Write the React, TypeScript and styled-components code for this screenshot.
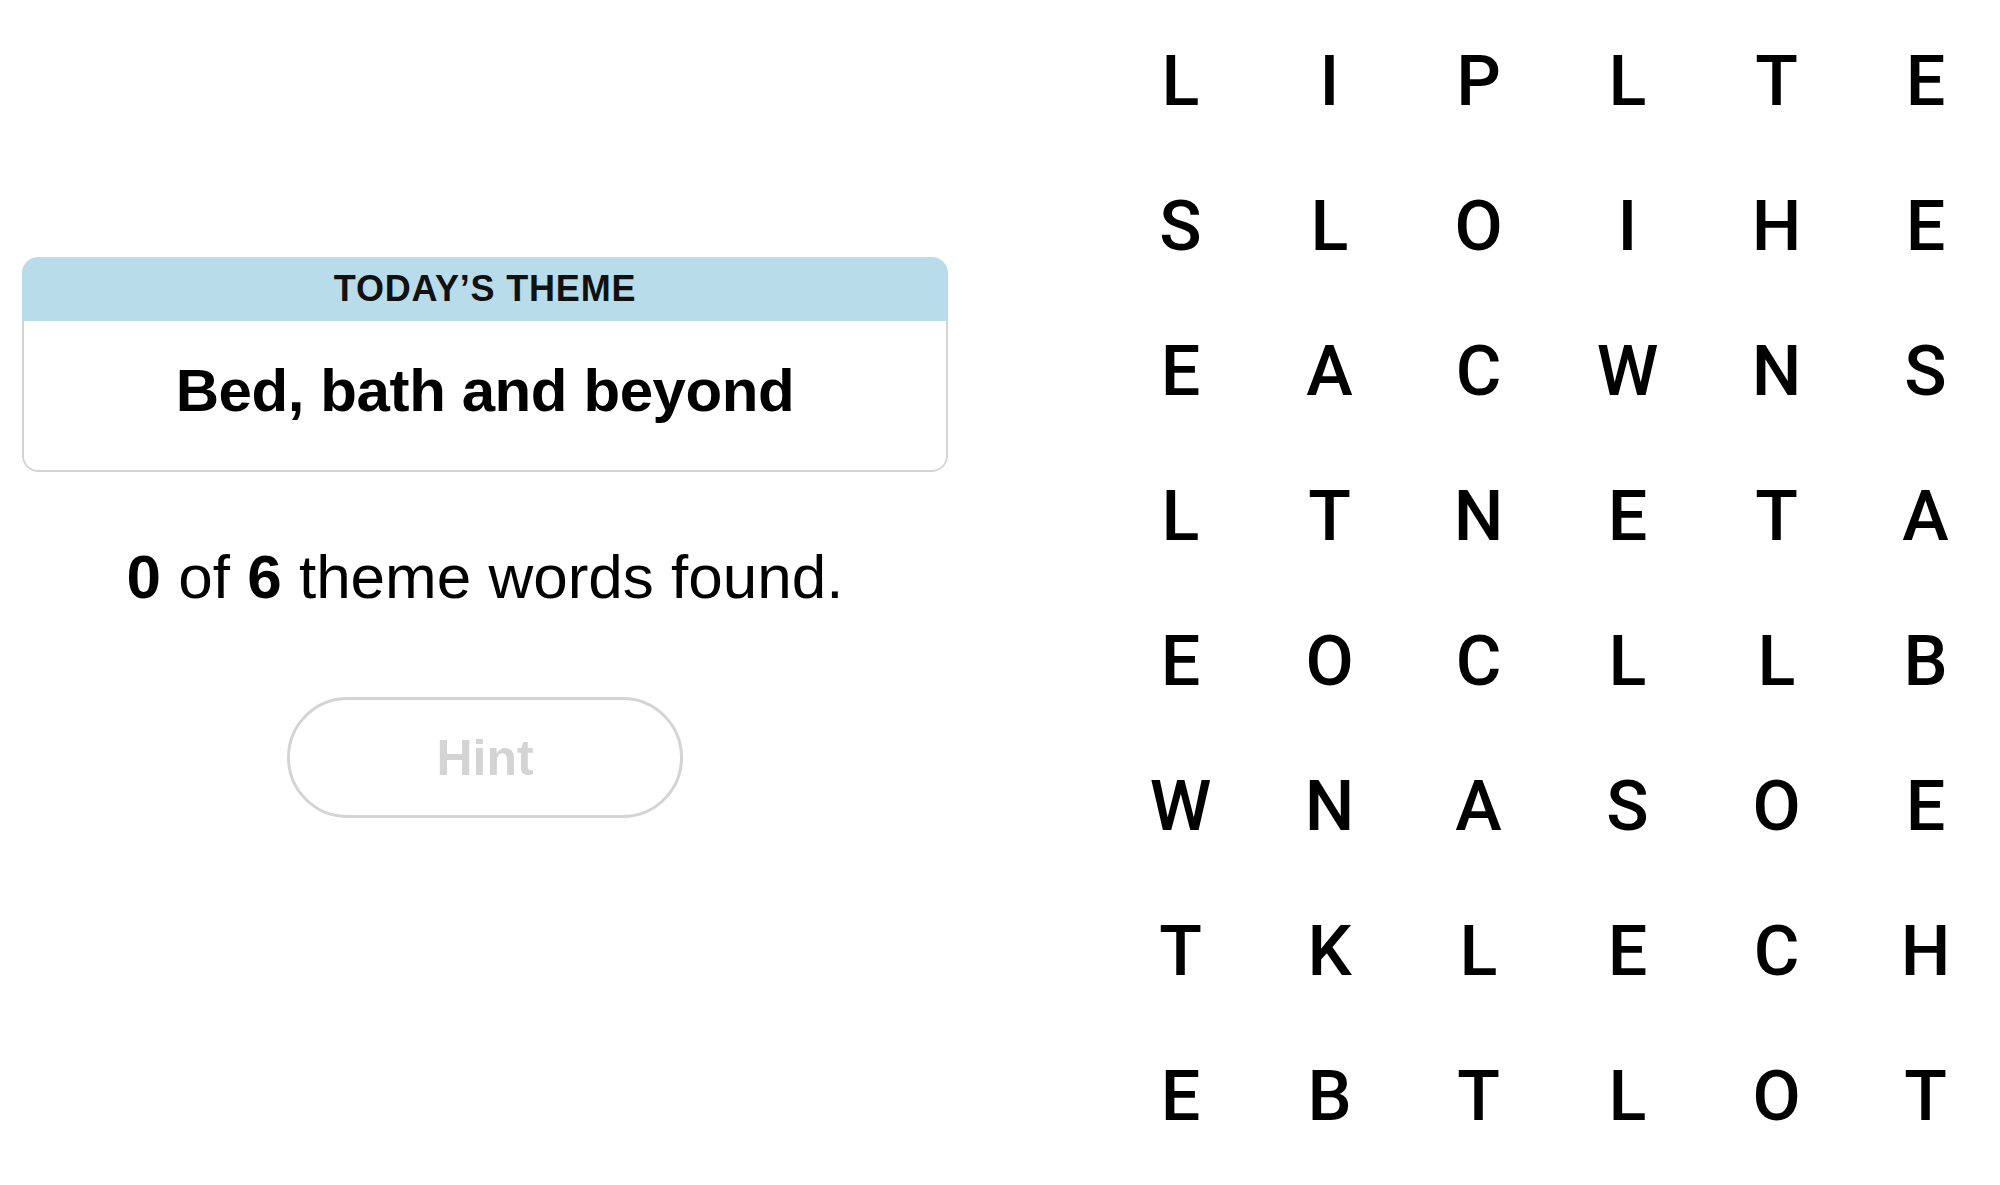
import React from "react";
import styled, { createGlobalStyle } from "styled-components";

const GlobalStyle = createGlobalStyle`
  html, body {
    margin: 0;
    padding: 0;
    background: #ffffff;
  }
  body {
    font-family: "Liberation Sans", Arial, sans-serif;
    color: #000000;
  }
`;

const Page = styled.div`
  display: flex;
  flex-direction: row;
  width: 2000px;
  height: 1185px;
  overflow: hidden;
`;

const LeftPanel = styled.section`
  width: 970px;
  box-sizing: border-box;
  padding: 257px 22px 0 22px;
  display: flex;
  flex-direction: column;
  align-items: center;
`;

const ThemeCard = styled.div`
  width: 926px;
  border-radius: 16px;
  overflow: hidden;
  display: flex;
  flex-direction: column;
`;

const ThemeHeader = styled.div`
  height: 64px;
  background: #b8dcea;
  display: flex;
  align-items: center;
  justify-content: center;
  font-family: "Liberation Sans", Arial, sans-serif;
  font-weight: 700;
  font-size: 36px;
  letter-spacing: 0.8px;
  line-height: 1;
  color: #111111;
`;

const ThemeBody = styled.div`
  height: 151px;
  box-sizing: border-box;
  border: 2px solid #d4d4d4;
  border-top: none;
  border-radius: 0 0 16px 16px;
  display: flex;
  align-items: center;
  justify-content: center;
  font-family: "Liberation Sans", Arial, sans-serif;
  font-weight: 700;
  font-size: 60px;
  letter-spacing: -0.4px;
  line-height: 1;
  padding-bottom: 10px;
`;

const FoundText = styled.p`
  margin: 74px 0 0 0;
  font-family: "Liberation Sans", Arial, sans-serif;
  font-size: 62px;
  line-height: 1;
  font-weight: 400;
  color: #000;
  b {
    font-weight: 700;
  }
`;

const HintButton = styled.button`
  margin-top: 89px;
  width: 396px;
  height: 121px;
  box-sizing: border-box;
  border: 3px solid #d4d4d4;
  border-radius: 61px;
  background: #ffffff;
  color: #d4d4d4;
  font-family: "Liberation Sans", Arial, sans-serif;
  font-weight: 700;
  font-size: 50px;
  line-height: 1;
  display: flex;
  align-items: center;
  justify-content: center;
  padding: 0;
  cursor: default;
`;

const Board = styled.div`
  margin-left: auto;
  padding-top: 8px;
  display: grid;
  grid-template-columns: repeat(6, 149px);
  grid-auto-rows: 145px;
`;

const Cell = styled.div`
  display: flex;
  align-items: center;
  justify-content: center;
  font-family: "Roboto", "Liberation Sans", Arial, sans-serif;
  font-weight: 500;
  font-size: 70px;
  line-height: 1;
  color: #000;
`;

const rows = [
  "LIPLTE",
  "SLOIHE",
  "EACWNS",
  "LTNETA",
  "EOCLLB",
  "WNASOE",
  "TKLECH",
  "EBTLOT",
];

export default function App() {
  return (
    <>
      <GlobalStyle />
      <Page>
        <LeftPanel>
          <ThemeCard>
            <ThemeHeader>TODAY’S THEME</ThemeHeader>
            <ThemeBody>Bed, bath and beyond</ThemeBody>
          </ThemeCard>
          <FoundText>
            <b>0</b> of <b>6</b> theme words found.
          </FoundText>
          <HintButton>Hint</HintButton>
        </LeftPanel>
        <Board>
          {rows.map((row, r) =>
            row.split("").map((ch, c) => <Cell key={`${r}-${c}`}>{ch}</Cell>)
          )}
        </Board>
      </Page>
    </>
  );
}
